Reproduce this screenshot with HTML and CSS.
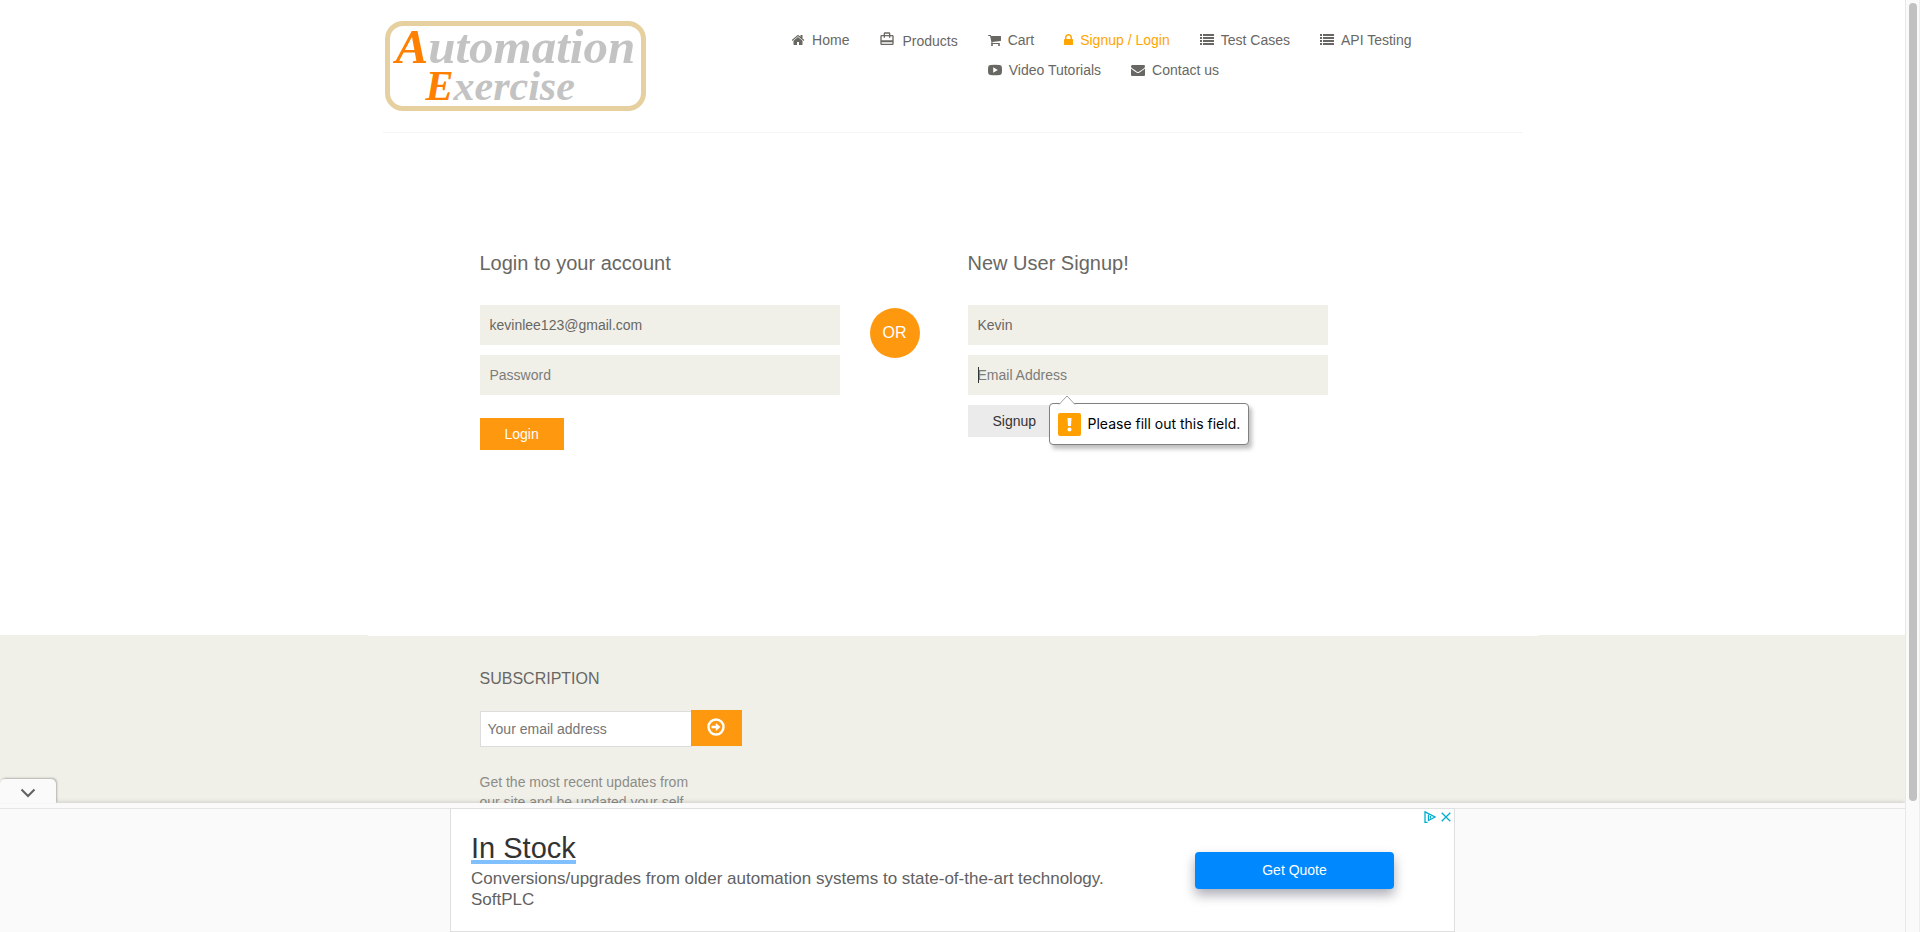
FILE: index.html
```html
<!DOCTYPE html>
<html lang="en">
<head>
<meta charset="utf-8">
<title>Automation Exercise - Signup / Login</title>
<link rel="stylesheet" href="styles.css">
</head>
<body>
<div class="viewport">
  <div class="page">
    <header class="container">
      <div class="header-row">
        <a class="logo" href="#" aria-label="Automation Exercise">
          <span class="logo-top"><span class="logo-cap">A</span>utomation</span>
          <span class="logo-bottom"><span class="logo-cap">E</span>xercise</span>
        </a>
        <nav class="nav">
          <ul class="nav-list">
            <li><a href="#"><svg class="icon" width="13" height="14" viewBox="64 0 1664 1792"><path d="M1408 992v480q0 26-19 45t-45 19h-384v-384h-256v384h-384q-26 0-45-19t-19-45v-480q0-1 .5-3t.5-3l575-474 575 474q1 2 1 6zm223-69l-62 74q-8 9-21 11h-3q-13 0-21-7l-692-577-692 577q-12 8-24 7-13-2-21-11l-62-74q-8-10-7-23.5t11-21.5l719-599q32-26 76-26t76 26l244 204v-195q0-14 9-23t23-9h192q14 0 23 9t9 23v408l219 182q10 8 11 21.5t-7 23.5z"/></svg>Home</a></li>
            <li class="nav-products"><a href="#"><svg class="icon icon-bag" width="16" height="16" viewBox="0 0 24 24"><path d="M20 6h-3V4c0-1.11-.89-2-2-2H9c-1.11 0-2 .89-2 2v2H4c-1.11 0-2 .89-2 2v11c0 1.11.89 2 2 2h16c1.11 0 2-.89 2-2V8c0-1.11-.89-2-2-2zM9 4h6v2H9V4zm11 15H4v-2h16v2zm0-5H4V8h3v2h2V8h6v2h2V8h3v6z"/></svg>Products</a></li>
            <li><a href="#"><svg class="icon" width="13" height="14" viewBox="64 0 1664 1792"><path d="M704 1536q0 52-38 90t-90 38-90-38-38-90 38-90 90-38 90 38 38 90zm896 0q0 52-38 90t-90 38-90-38-38-90 38-90 90-38 90 38 38 90zm128-1088v512q0 24-16.5 42.5t-40.5 21.5l-1044 122q13 60 13 70 0 16-24 64h920q26 0 45 19t19 45-19 45-45 19h-1024q-26 0-45-19t-19-45q0-11 8-31.5t16-36 21.5-40 15.5-29.5l-177-823h-204q-26 0-45-19t-19-45 19-45 45-19h256q16 0 28.5 6.5t19.5 15.5 13 24.5 8 26 5.5 29.5 4.5 26h1201q26 0 45 19t19 45z"/></svg>Cart</a></li>
            <li><a class="active" href="#"><svg class="icon" width="9" height="14" viewBox="320 0 1152 1792"><path d="M640 768h512v-192q0-106-75-181t-181-75-181 75-75 181v192zm832 96v576q0 40-28 68t-68 28h-960q-40 0-68-28t-28-68v-576q0-40 28-68t68-28h32v-192q0-184 132-316t316-132 316 132 132 316v192h32q40 0 68 28t28 68z"/></svg>Signup / Login</a></li>
            <li><a href="#"><svg class="icon" width="14" height="14" viewBox="0 0 14 14"><path d="M0 1h2v2h-2zM3 1h11v2h-11zM0 4h2v2h-2zM3 4h11v2h-11zM0 7h2v2h-2zM3 7h11v2h-11zM0 10h2v2h-2zM3 10h11v2h-11z"/></svg>Test Cases</a></li>
            <li><a href="#"><svg class="icon" width="14" height="14" viewBox="0 0 14 14"><path d="M0 1h2v2h-2zM3 1h11v2h-11zM0 4h2v2h-2zM3 4h11v2h-11zM0 7h2v2h-2zM3 7h11v2h-11zM0 10h2v2h-2zM3 10h11v2h-11z"/></svg>API Testing</a></li>
            <li><a href="#"><svg class="icon" width="14" height="14" viewBox="0 0 14 14"><path fill-rule="evenodd" d="M2.500 2Q7 1.600 11.500 2Q13.600 2.200 13.800 4Q14.200 7 13.800 10Q13.600 11.800 11.500 12Q7 12.400 2.500 12Q.4 11.800 .2 10Q-.2 7 .2 4Q.4 2.200 2.500 2zM5.200 4.200v5.600l4.600-2.800z"/></svg>Video Tutorials</a></li>
            <li><a href="#"><svg class="icon" width="14" height="14" viewBox="0 0 1792 1792"><path d="M1792 710v794q0 66-47 113t-113 47h-1472q-66 0-113-47t-47-113v-794q44 49 101 87 362 246 497 345 57 42 92.500 65.500t94.500 48 110 24.500h2q51 0 110-24.500t94.500-48 92.500-65.500q170-123 498-345 57-39 100-87zm0-294q0 79-49 151t-122 123q-376 261-468 325-10 7-42.500 31t-54 38.500-52 32.500-57.500 27-50 9h-2q-23 0-50-9t-57.500-27-52-32.500-54-38.500-42.500-31q-91-64-262-182.500t-205-142.500q-62-42-117-115.500t-55-136.500q0-78 41.500-130t118.500-52h1472q65 0 112.500 47t47.500 113z"/></svg>Contact us</a></li>
          </ul>
        </nav>
      </div>
    </header>

    <main class="container">
      <div class="forms">
        <form class="login-form" novalidate>
          <h2>Login to your account</h2>
          <input class="field" type="email" value="kevinlee123@gmail.com" aria-label="Email Address">
          <input class="field" type="password" placeholder="Password" aria-label="Password">
          <button class="btn btn-login" type="button">Login</button>
        </form>
        <div class="or-wrap"><h2 class="or">OR</h2></div>
        <form class="signup-form" novalidate>
          <h2>New User Signup!</h2>
          <input class="field" type="text" value="Kevin" aria-label="Name">
          <div class="field-wrap">
            <input class="field" type="email" placeholder="Email Address" aria-label="Email Address">
            <span class="caret"></span>
            <div class="bubble" role="alert">
              <svg class="bubble-arrow" width="18" height="10" viewBox="0 0 18 10"><path d="M1 9.500L9 1l8 8.500" fill="#fff" stroke="#a0a0a0"/></svg>
              <svg width="23" height="23" viewBox="0 0 23 23"><rect width="23" height="23" rx="2" fill="#ffa000"/><path d="M9.500 5h4l-.5 8h-3z" fill="#fff"/><circle cx="11.500" cy="16.500" r="2" fill="#fff"/></svg>
              <span>Please fill out this field.</span>
            </div>
          </div>
          <button class="btn btn-signup" type="button">Signup</button>
        </form>
      </div>
    </main>

    <footer class="footer">
      <div class="container footer-inner">
        <form class="subscribe">
          <h2>Subscription</h2>
          <div class="subscribe-row">
            <input type="email" placeholder="Your email address" aria-label="Your email address">
            <button type="button" aria-label="Subscribe">
              <svg width="18" height="18" viewBox="0 0 18 18"><circle cx="9" cy="9" r="7.500" fill="none" stroke="#fff" stroke-width="2.400"/><path d="M4.500 7.800h4.300V5l4.700 4-4.700 4v-2.800H4.500z" fill="#fff"/></svg>
            </button>
          </div>
          <p>Get the most recent updates from<br>our site and be updated your self...</p>
        </form>
      </div>
    </footer>

    <aside class="anchor-ad">
      <button class="ad-toggle" type="button" aria-label="Collapse">
        <svg width="16" height="10" viewBox="0 0 16 10"><path d="M1.500 1.500L8 8l6.500-6.500" fill="none" stroke="#616161" stroke-width="2"/></svg>
      </button>
      <div class="ad-area">
        <div class="ad-card">
          <div class="ad-text">
            <a class="ad-title" href="#">In Stock</a>
            <p>Conversions/upgrades from older automation systems to state-of-the-art technology.<br>SoftPLC</p>
          </div>
          <button class="ad-cta" type="button">Get Quote</button>
          <div class="ad-marks">
            <svg width="12" height="12" viewBox="0 0 12 12"><path d="M3.500 11.300H1V.8l10 5.200-6.500 3.500V3.800" fill="none" stroke="#00aecd" stroke-width="1.300"/><path d="M6.500 5v2.500" stroke="#00aecd"/></svg>
            <svg width="10" height="10" viewBox="0 0 10 10"><path d="M.7.700l8.600 8.600M9.300.700L.7 9.300" stroke="#00aecd" stroke-width="1.300"/></svg>
          </div>
        </div>
      </div>
    </aside>
  </div>
  <div class="scrollbar"><div class="thumb"></div></div>
</div>
</body>
</html>
```

FILE: styles.css
```css
* { box-sizing: border-box; }

body {
  margin: 0;
  background: #fff;
  color: #696763;
  font: 14px/20px "Liberation Sans", Arial, sans-serif;
}

h2, p, ul { margin: 0; padding: 0; font-weight: 400; }
a { color: inherit; text-decoration: none; }
button, input { font: inherit; border: 0; border-radius: 0; }

.viewport { display: flex; height: 100vh; overflow: hidden; }
.page { position: relative; flex: 1; min-width: 0; overflow: hidden; }

.container {
  max-width: 1170px;
  margin: 0 auto;
  padding: 0 15px;
}

/* Header */
.header-row {
  display: flex;
  justify-content: space-between;
  min-height: 133px;
  border-bottom: 1px solid #f5f5f5;
}

.logo {
  display: flex;
  flex-direction: column;
  width: 261px;
  height: 90px;
  margin: 21px 0 0 2px;
  border: 5px solid #e6d0a0;
  border-radius: 18px;
  color: #c3c3c3;
  font-family: "Liberation Serif", serif;
  font-style: italic;
  font-weight: 700;
  white-space: nowrap;
}
.logo-top { padding-left: 6px; font-size: 49px; line-height: 42px; }
.logo-bottom { padding-left: 36px; font-size: 42px; line-height: 36px; }
.logo-cap { color: #ff8000; }

.nav { width: 66%; padding: 25px 0 0 22px; }
.nav-list { list-style: none; }
.nav-list li { float: left; height: 30px; margin-right: 30px; }
.nav-list .nav-products { height: 32px; padding-top: 1px; }
.nav-list a { display: flex; align-items: center; gap: 7px; line-height: 30px; }
.nav-list .active { color: #ffa500; }
.icon { fill: currentColor; }
.icon-bag { margin-bottom: 5px; }

/* Login and signup forms */
.forms {
  display: grid;
  grid-template-columns: 360px 68px 360px;
  gap: 30px;
  padding: 118px 0 185px 97px;
}
.forms h2 { margin-bottom: 30px; font-size: 20px; line-height: 24px; }

.field {
  display: block;
  width: 100%;
  height: 40px;
  margin-bottom: 10px;
  padding: 0 10px;
  background: #f0f0e9;
  color: #696763;
  outline: 0;
}
.field::placeholder { color: #7d7c79; }
.btn { display: block; height: 32px; padding: 0 25px; }
.btn-login { margin-top: 23px; background: #fe980f; color: #fff; }
.btn-signup { background: #ebebeb; color: #333; }

.or-wrap { padding-top: 57px; }
.forms .or {
  width: 50px;
  height: 50px;
  border-radius: 50%;
  background: #fe980f;
  color: #fff;
  font-size: 16px;
  line-height: 50px;
  text-align: center;
}

.field-wrap { position: relative; }
.caret {
  position: absolute;
  top: 12px;
  left: 10px;
  width: 1px;
  height: 16px;
  background: #333;
}
.bubble {
  position: absolute;
  top: 48px;
  left: 81px;
  display: flex;
  align-items: center;
  gap: 7px;
  height: 42px;
  padding: 0 8px;
  border: 1px solid #808080;
  border-radius: 4px;
  background: #fff;
  box-shadow: 3px 4px 4px rgba(0, 0, 0, .25);
  color: #000;
  font-family: Inter, sans-serif;
  font-size: 14px;
  white-space: nowrap;
}
.bubble-arrow { position: absolute; top: -9px; left: 8px; }

/* Footer */
.footer { min-height: 400px; background: #f0f0e9; }
.footer-inner { border-top: 1px solid #fff; }
.subscribe { padding: 32px 0 0 97px; }
.subscribe h2 {
  margin-bottom: 20px;
  font-size: 16px;
  line-height: 22px;
  text-transform: uppercase;
}
.subscribe-row { display: flex; align-items: flex-start; margin-bottom: 25px; }
.subscribe-row input {
  width: 212px;
  height: 36px;
  margin-top: 1px;
  padding: 0 7px;
  border: 1px solid #ddd;
  background: #fff;
}
.subscribe-row input::placeholder { color: #757575; }
.subscribe-row button {
  display: grid;
  place-items: center;
  width: 51px;
  height: 36px;
  margin-left: -1px;
  padding: 0 0 2px;
  background: #fe980f;
}
.subscribe p { color: #8c8c88; }

/* Anchored advertisement */
.anchor-ad {
  position: absolute;
  right: 0;
  bottom: 0;
  left: 0;
  padding-top: 5px;
  background: #fafafa;
  box-shadow: 0 0 5px rgba(0, 0, 0, .2);
}
.ad-toggle {
  position: absolute;
  bottom: 100%;
  left: 0;
  display: grid;
  place-items: center;
  width: 56px;
  height: 24px;
  padding: 4px 0 0;
  border-radius: 5px 5px 0 0;
  background: #fafafa;
  box-shadow: 1px -1px 2px rgba(0, 0, 0, .25);
}
.ad-area { border-top: 1px solid #e6e6e8; }
.ad-card {
  position: relative;
  display: flex;
  align-items: center;
  justify-content: space-between;
  max-width: 1005px;
  height: 124px;
  margin: -1px auto 0;
  padding: 0 60px 0 20px;
  border: 1px solid #dedfe0;
  background: #fff;
}
.ad-text { color: #616161; font-size: 17px; line-height: 21px; }
.ad-title {
  display: inline-block;
  padding-top: 6px;
  border-bottom: 4px solid #80c0ff;
  color: #333;
  font-size: 29px;
  line-height: 24px;
}
.ad-text p { margin-top: 4px; }
.ad-cta {
  width: 199px;
  height: 37px;
  border-radius: 4px;
  background: #0088ff;
  box-shadow: 0 6px 12px rgba(20, 20, 50, .35);
  color: #fff;
}
.ad-marks { position: absolute; top: 2px; right: 3px; display: flex; align-items: center; gap: 5px; }

/* Scroll track */
.scrollbar {
  width: 15px;
  padding: 3px 2px 131px 3px;
  border-right: 1px solid #ededed;
  border-left: 1px solid #e8e8e8;
  background: #fafafa;
}
.thumb { height: 100%; border-radius: 4px; background: #c1c1c1; }
```
